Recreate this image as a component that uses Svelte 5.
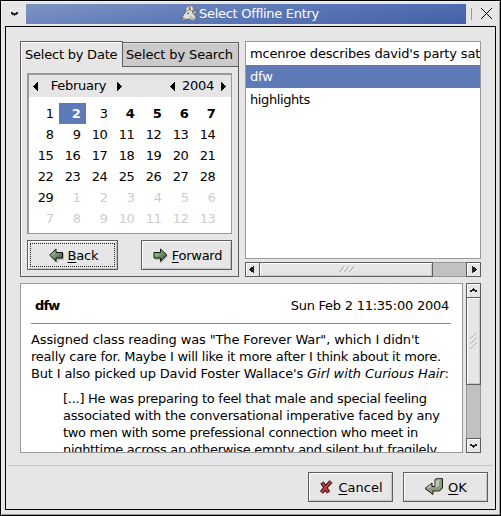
<script>
  const weeks = [
    [1, 2, 3, 4, 5, 6, 7],
    [8, 9, 10, 11, 12, 13, 14],
    [15, 16, 17, 18, 19, 20, 21],
    [22, 23, 24, 25, 26, 27, 28],
    [29, 1, 2, 3, 4, 5, 6],
    [7, 8, 9, 10, 11, 12, 13],
  ];
  const marked = [2, 4, 5, 6, 7];
  const entries = ["mcenroe describes david's party sat", 'dfw', 'highlights'];
  let selected = $state(1);
  const outside = (w, d) => w === 5 || (w === 4 && d < 8);
</script>

{#snippet arrow(points)}
  <svg class="arrow" width="13" height="13" viewBox="0 0 13 13" shape-rendering="crispEdges"><path d={points} /></svg>
{/snippet}

<div class="window">
  <header>
    <div class="menu">
      <svg width="7" height="4" viewBox="0 0 7 4" shape-rendering="crispEdges"><path d="M0 0H2V1H5V0H7V2H6V3H4V4H3V3H1V2H0Z" fill="#222" /></svg>
    </div>
    <div class="title">
      <svg class="goat" width="17" height="17" viewBox="0 0 17 17">
        <path d="M1 12.5L3 9 5.5 5.5 8 4.5 11.5 5.5 12 8 14 10 15.3 13.5 12 15.5 8 14 5 14.5 2.5 15.5 .8 14.5Z" fill="#dededb" stroke="#3c4050" stroke-width=".7" />
        <path d="M8 14L9.5 10.5 12 12.5 15 13.5 12 15.5Z" fill="#b9b9b5" />
        <path d="M5 5.5Q4.5 1.5 9 1Q7.3 2.7 8 5ZM9.5 5.2Q10 2 8.5 .6Q13.2 1 12 5.8Z" fill="#f2e9c6" stroke="#84795a" stroke-width=".5" />
        <path d="M11.8 6.5L16.2 5.5 14.5 9 12 9Z" fill="#cfc8ae" stroke="#4c4a48" stroke-width=".6" />
        <path d="M6.2 8.3H8M1.8 13.2L3.5 13.6" stroke="#333" stroke-width="1.1" />
      </svg>
      <span>Select Offline Entry</span>
    </div>
    <div class="close">
      <svg width="11" height="11" viewBox="0 0 11 11" shape-rendering="crispEdges"><path d="M0 0L11 11M11 0L0 11" stroke="#000" /></svg>
    </div>
  </header>

  <main>
    <div class="top">
      <section class="notebook">
        <nav>
          <div class="tab current"><span>Select by Date</span></div>
          <div class="tab"><span>Select by Search</span></div>
        </nav>
        <div class="page">
          <div class="calendar">
            <div class="calhead">
              {@render arrow('M9 2V11H8V10H7V9H6V8H5V7H4V6H5V5H6V4H7V3H8V2Z')}
              <span class="month">February</span>
              {@render arrow('M4 2V11H5V10H6V9H7V8H8V7H9V6H8V5H7V4H6V3H5V2Z')}
              <i></i>
              {@render arrow('M9 2V11H8V10H7V9H6V8H5V7H4V6H5V5H6V4H7V3H8V2Z')}
              <span class="year">2004</span>
              {@render arrow('M4 2V11H5V10H6V9H7V8H8V7H9V6H8V5H7V4H6V3H5V2Z')}
            </div>
            <div class="days">
              {#each weeks as week, w}
                {#each week as d}
                  <span class:out={outside(w, d)} class:bold={w === 0 && marked.includes(d)} class:today={w === 0 && d === 2}>{d}</span>
                {/each}
              {/each}
            </div>
          </div>
          <div class="nav">
            <button class="focus">
              <svg width="15" height="15" viewBox="0 0 15 15">
                <path d="M2 8L8 14V11H14V5" fill="none" stroke="#bbb" stroke-width="2" />
                <path d="M.7 7L7 1V4.5H13.5V10H7V13.3Z" fill="url(#green)" stroke="#111" />
              </svg>
              <span><u>B</u>ack</span>
            </button>
            <button class="forward">
              <svg width="15" height="15" viewBox="0 0 15 15">
                <path d="M2 11H8V14L14 8" fill="none" stroke="#bbb" stroke-width="2" />
                <path d="M13.8 7L7.5 1V4.5H1V10H7.5V13.3Z" fill="url(#green)" stroke="#111" />
              </svg>
              <span><u>F</u>orward</span>
            </button>
          </div>
        </div>
      </section>

      <section class="entries">
        <div class="list">
          {#each entries as e, n}
            <div class="entry e{n}" class:selected={n === selected}>{e}</div>
          {/each}
        </div>
        <div class="hbar">
          <b>{@render arrow('M8 3V10H7V9H5V8H4V7H3V6H4V5H5V4H7V3Z')}</b>
          <div class="thumb">
            <svg width="17" height="7" viewBox="0 0 17 7"><path d="M1 6.5L6 .5M6 6.5L11 .5M11 6.5L16 .5" stroke="#999" /><path d="M2 6.8L7 .8M7 6.8L12 .8M12 6.8L17 .8" stroke="#fff" stroke-width=".7" /></svg>
          </div>
          <div class="trough"></div>
          <b>{@render arrow('M5 3V10H6V9H8V8H9V7H10V6H9V5H8V4H6V3Z')}</b>
        </div>
      </section>
    </div>

    <div class="bottom">
      <article>
        <div class="arthead"><strong>dfw</strong><span>Sun Feb 2 11:35:00 2004</span></div>
        <p>
          <span class="l1">Assigned class reading was "The Forever War", which I didn't</span><br />
          <span class="l2">really care for. Maybe I will like it more after I think about it more.</span><br />
          <span class="l3">But I also picked up David Foster Wallace's <em>Girl with Curious Hair</em>:</span>
        </p>
        <blockquote>
          <span class="q1">[...] He was preparing to feel that male and special feeling</span><br />
          <span class="q2">associated with the conversational imperative faced by any</span><br />
          <span class="q3">two men with some prefessional connection who meet in</span><br />
          <span class="q4">nighttime across an otherwise empty and silent but fragilely</span>
        </blockquote>
      </article>
      <div class="vbar">
        <b>{@render arrow('M6 4H7V5H8V6H10V8H8V7H5V8H3V6H5V5H6Z')}</b>
        <div class="thumb">
          <svg width="7" height="17" viewBox="0 0 7 17"><path d="M.5 6L6.5 0M.5 11L6.5 5M.5 16L6.5 10" stroke="#999" /><path d="M.5 7L6.5 1M.5 12L6.5 6M.5 17L6.5 11" stroke="#fff" stroke-width=".7" /></svg>
        </div>
        <div class="trough"></div>
        <b>{@render arrow('M6 9H7V8H8V7H10V5H8V6H5V5H3V7H5V8H6Z')}</b>
      </div>
    </div>

    <hr />
    <footer>
      <button class="cancel">
        <svg width="15" height="15" viewBox="0 0 15 15">
          <path d="M3 2.5L6 7 9.5 12.5M12 1.5L7 7 2.5 12.5" fill="none" stroke="#1a0808" stroke-width="4" />
          <path d="M3 2.5L6 7 9.5 12.5M12 1.5L7 7 2.5 12.5" fill="none" stroke="#c03d45" stroke-width="2.2" />
        </svg>
        <span><u>C</u>ancel</span>
      </button>
      <button class="ok">
        <svg width="20" height="18" viewBox="0 0 20 18">
          <path d="M11 1.5L13 .7H18.5V10L15.5 13H9V16.5L1 10.5 8 5V8.5H11Z" fill="#8c9c80" stroke="#151a12" />
          <path d="M11.5 3L13 1.5H17.5L15 3V8L11.5 9.5M2 10.3L7 6.3V9.5" fill="#bac6ae" />
          <path d="M8.5 15V12.5H15L18 9.5" fill="none" stroke="#59664f" />
        </svg>
        <span><u>O</u>K</span>
      </button>
    </footer>
  </main>
  <svg width="0" height="0" class="defs"><defs><linearGradient id="green" x1="0" y1="0" x2="1" y2="1"><stop offset="0" stop-color="#b9d8ae" /><stop offset=".5" stop-color="#71916a" /><stop offset="1" stop-color="#344c31" /></linearGradient></defs></svg>
</div>

<style>
  .window, .window * { box-sizing: border-box; }
  .window {
    width: 501px; height: 516px; background: #e6e6e6; border: 1px solid #000;
    box-shadow: inset 1px 1px #f4eeee, inset -1px -1px #999;
    padding: 3px 4px 5px; font: 13px/17px "DejaVu Sans", sans-serif; color: #000;
    display: flex; flex-direction: column; overflow: hidden; white-space: nowrap;
  }
  svg { display: block; flex: none; }
  .defs { position: absolute; }
  header { display: flex; height: 22px; flex: none; }
  .menu { width: 21px; padding: 8px 0 0 6px; }
  .title {
    width: 440px; height: 20px; padding-left: 8px; color: #fff; display: flex; justify-content: center; align-items: center;
    letter-spacing: -.3px; line-height: 18px; padding-bottom: 1px;
    background: linear-gradient(172deg, #8094c4, #5f7ab8 45%, #4361a8);
  }
  .goat { margin-right: 1px; }
  .close { margin: 4px 0 0 5px; border-left: 1px solid #999; height: 12px; padding-left: 9px; }
  main { height: 484px; width: 491px; border: 1px solid #000; display: flex; flex-direction: column; padding-top: 14px; }
  .top { display: flex; height: 236px; gap: 6px; margin-left: 14px; flex: none; }
  .notebook { width: 219px; display: flex; flex-direction: column; }
  nav { display: flex; height: 26px; align-items: flex-end; flex: none; }
  .tab {
    height: 25px; width: 116px; border: 1px solid #5e5e5e; border-left: 0; background: #cacaca; line-height: 23px; padding-left: 3px;
    box-shadow: inset 0 1px #e4e4e4; letter-spacing: -.13px;
  }
  .tab.current {
    width: 103px; height: 26px; background: #e6e6e6; border-left: 1px solid #5e5e5e; border-bottom: 0;
    padding-left: 4px; line-height: 25px; box-shadow: inset 1px 1px #fff; letter-spacing: -.22px;
  }
  .page { flex: 1; border: solid #5e5e5e; border-width: 0 1px 1px; padding: 6px; box-shadow: inset 1px 0 #fff; }
  .calendar { width: 205px; height: 161px; border: 1px solid #999; border-top-width: 2px; border-left-width: 2px; background: #fff; }
  .calhead { display: flex; align-items: center; height: 22px; background: #e6e6e6; line-height: 22px; letter-spacing: -.25px; padding-right: 1px; }
  .calhead i { flex: 1; }
  .month { width: 71px; text-align: center; padding-left: 2px; }
  .year { width: 38px; text-align: center; }
  .days { display: grid; grid-template-columns: repeat(7, 27px); grid-auto-rows: 21px; padding: 6px 0 0 3px; line-height: 21px; text-align: right; letter-spacing: -.4px; }
  .days span { padding-right: 5.5px; }
  .out { color: #ccc; }
  .bold { font-weight: bold; }
  .today { background: #5e7ab7; color: #fff; }
  .nav { display: flex; justify-content: space-between; width: 205px; margin-top: 6px; }
  button {
    font: inherit; color: inherit; width: 91px; height: 30px; padding: 0; border: 1px solid #5e5e5e; border-radius: 0; background: #e6e6e6;
    box-shadow: inset 1px 1px #fff, inset -1px -1px #c4c4c4; display: flex; align-items: center; justify-content: center; gap: 4px;
  }
  .focus { outline: 1px dotted #222; outline-offset: -4px; padding-left: 2px; letter-spacing: -.15px; }
  .forward { padding-left: 2px; letter-spacing: -.28px; }
  .cancel { padding-left: 1px; }
  u { text-decoration: underline; text-underline-offset: 2px; text-decoration-thickness: 1px; text-decoration-skip-ink: none; }
  .entries { width: 236px; display: flex; flex-direction: column; gap: 3px; }
  .list { height: 218px; border: 1px solid #999; background: #fff; overflow: hidden; }
  .entry { height: 23px; line-height: 23px; padding-left: 4px; letter-spacing: -.17px; }
  .e2 { letter-spacing: -.4px; }
  .selected { background: #5e7ab7; color: #fff; }
  .hbar { display: flex; height: 15px; }
  .hbar b, .vbar b { width: 15px; height: 15px; border: 1px solid #5e5e5e; flex: none; box-shadow: inset 1px 1px #fff; }
  .hbar .arrow, .vbar .arrow { fill: #222; }
  .arrow { flex: none; }
  .thumb { display: flex; align-items: center; justify-content: center; border: 1px solid #5e5e5e; box-shadow: inset 1px 1px #fff, inset -1px -1px #c8c8c8; }
  .hbar .thumb { width: 173px; border-left: 0; }
  .trough { flex: 1; background: #c1c1c1; border: 0 solid #999; }
  .hbar .trough { border-width: 1px 0; }
  .bottom { display: flex; gap: 3px; height: 170px; margin: 6px 0 0 14px; flex: none; }
  article { width: 443px; border: 1px solid #999; background: #fff; overflow: hidden; padding: 13px 11px 0 10px; }
  .arthead { display: flex; justify-content: space-between; height: 27px; padding: 0 2px 0 4px; border-bottom: 1px solid #888; letter-spacing: -.25px; }
  .arthead strong { letter-spacing: -.8px; }
  p { margin: 7px 0 8px; }
  blockquote { margin: 0 0 0 32px; }
  .l1 { letter-spacing: -.135px; }
  .l2 { letter-spacing: -.245px; }
  .l3 { letter-spacing: -.15px; }
  em { letter-spacing: -.05px; }
  .q1 { letter-spacing: -.27px; }
  .q2 { letter-spacing: -.21px; }
  .q3 { letter-spacing: -.31px; }
  .q4 { letter-spacing: -.32px; }
  .vbar { display: flex; flex-direction: column; width: 15px; }
  .vbar .thumb { height: 87px; border-top: 0; }
  .vbar .trough { border-width: 0 1px; }
  hr { height: 1px; width: 485px; margin: 12px 0 0 2px; border: 0; background: #c4c4c4; flex: none; }
  footer { display: flex; justify-content: flex-end; gap: 10px; margin: 6px 7px 0 0; }
  footer button { width: 85px; }
</style>
